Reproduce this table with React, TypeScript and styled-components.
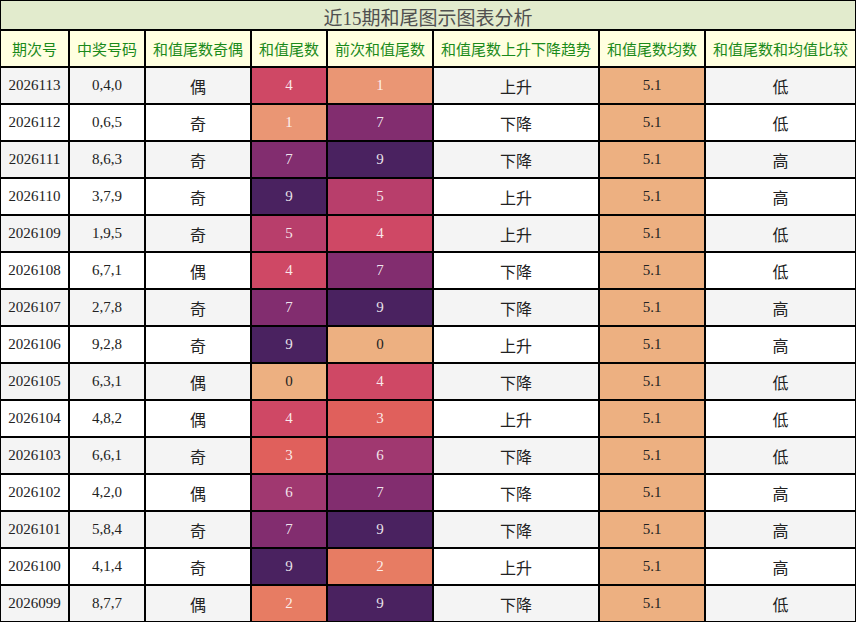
import React from "react";
import styled, { createGlobalStyle } from "styled-components";

const GlobalStyle = createGlobalStyle`
  html, body { margin: 0; padding: 0; background: #fff; }
  body { font-family: "Liberation Serif", "Noto Sans CJK SC", serif; }
`;

const palette: Record<number, string> = {
  0: "#edb081",
  1: "#ea9674",
  2: "#e77c63",
  3: "#e0605c",
  4: "#cf4865",
  5: "#b83e6b",
  6: "#a03870",
  7: "#822d6f",
  8: "#652766",
  9: "#4a2260",
};

const Grid = styled.div`
  display: grid;
  grid-template-columns: 69px 76px 106px 76px 106px 166px 106px 151px;
  width: 856px;
`;

const Cell = styled.div<{ $light?: boolean; $cjk?: boolean }>`
  box-sizing: border-box;
  height: 37px;
  border: 1px solid #000;
  display: flex;
  align-items: center;
  justify-content: center;
  color: ${(p) => (p.$light ? "rgba(255,255,255,0.88)" : "#222")};
  font-size: ${(p) => (p.$cjk ? "16px" : "15px")};
  font-family: ${(p) =>
    p.$cjk
      ? `"Noto Sans CJK SC", sans-serif`
      : `"Liberation Serif", "Noto Sans CJK SC", serif`};
  padding-top: ${(p) => (p.$cjk ? "1px" : "0")};
`;

const Title = styled.div`
  grid-column: 1 / -1;
  box-sizing: border-box;
  height: 30px;
  border: 1px solid #000;
  background: #e2ebcd;
  color: #505050;
  font-size: 19px;
  display: flex;
  align-items: center;
  justify-content: center;
  padding-top: 2px;
  font-family: "Liberation Serif", "Noto Sans CJK SC", serif;
`;

const Head = styled.div`
  box-sizing: border-box;
  height: 37px;
  border: 1px solid #000;
  background: #ffffe0;
  color: #1a8a1a;
  font-size: 15px;
  font-family: "Noto Sans CJK SC", sans-serif;
  display: flex;
  align-items: center;
  justify-content: center;
  white-space: nowrap;
`;

const Row = styled.div<{ $alt: boolean }>`
  display: contents;
  & > div {
    background-color: ${(p) => (p.$alt ? "#f4f4f4" : "#ffffff")};
  }
`;

const headers = [
  "期次号",
  "中奖号码",
  "和值尾数奇偶",
  "和值尾数",
  "前次和值尾数",
  "和值尾数上升下降趋势",
  "和值尾数均数",
  "和值尾数和均值比较",
];

type R = [string, string, string, number, number, string, string];
const rows: R[] = [
  ["2026113", "0,4,0", "偶", 4, 1, "上升", "低"],
  ["2026112", "0,6,5", "奇", 1, 7, "下降", "低"],
  ["2026111", "8,6,3", "奇", 7, 9, "下降", "高"],
  ["2026110", "3,7,9", "奇", 9, 5, "上升", "高"],
  ["2026109", "1,9,5", "奇", 5, 4, "上升", "低"],
  ["2026108", "6,7,1", "偶", 4, 7, "下降", "低"],
  ["2026107", "2,7,8", "奇", 7, 9, "下降", "高"],
  ["2026106", "9,2,8", "奇", 9, 0, "上升", "高"],
  ["2026105", "6,3,1", "偶", 0, 4, "下降", "低"],
  ["2026104", "4,8,2", "偶", 4, 3, "上升", "低"],
  ["2026103", "6,6,1", "奇", 3, 6, "下降", "低"],
  ["2026102", "4,2,0", "偶", 6, 7, "下降", "高"],
  ["2026101", "5,8,4", "奇", 7, 9, "下降", "高"],
  ["2026100", "4,1,4", "奇", 9, 2, "上升", "高"],
  ["2026099", "8,7,7", "偶", 2, 9, "下降", "低"],
];

const NumCell: React.FC<{ n: number }> = ({ n }) => (
  <Cell $light={n !== 0} style={{ backgroundColor: palette[n] }}>
    {n}
  </Cell>
);

export default function App() {
  return (
    <>
      <GlobalStyle />
      <Grid>
        <Title>近15期和尾图示图表分析</Title>
        {headers.map((h) => (
          <Head key={h}>{h}</Head>
        ))}
        {rows.map((r, i) => (
          <Row key={r[0]} $alt={i % 2 === 0}>
            <Cell>{r[0]}</Cell>
            <Cell>{r[1]}</Cell>
            <Cell $cjk>{r[2]}</Cell>
            <NumCell n={r[3]} />
            <NumCell n={r[4]} />
            <Cell $cjk>{r[5]}</Cell>
            <Cell style={{ backgroundColor: palette[0] }}>5.1</Cell>
            <Cell $cjk>{r[6]}</Cell>
          </Row>
        ))}
      </Grid>
    </>
  );
}
